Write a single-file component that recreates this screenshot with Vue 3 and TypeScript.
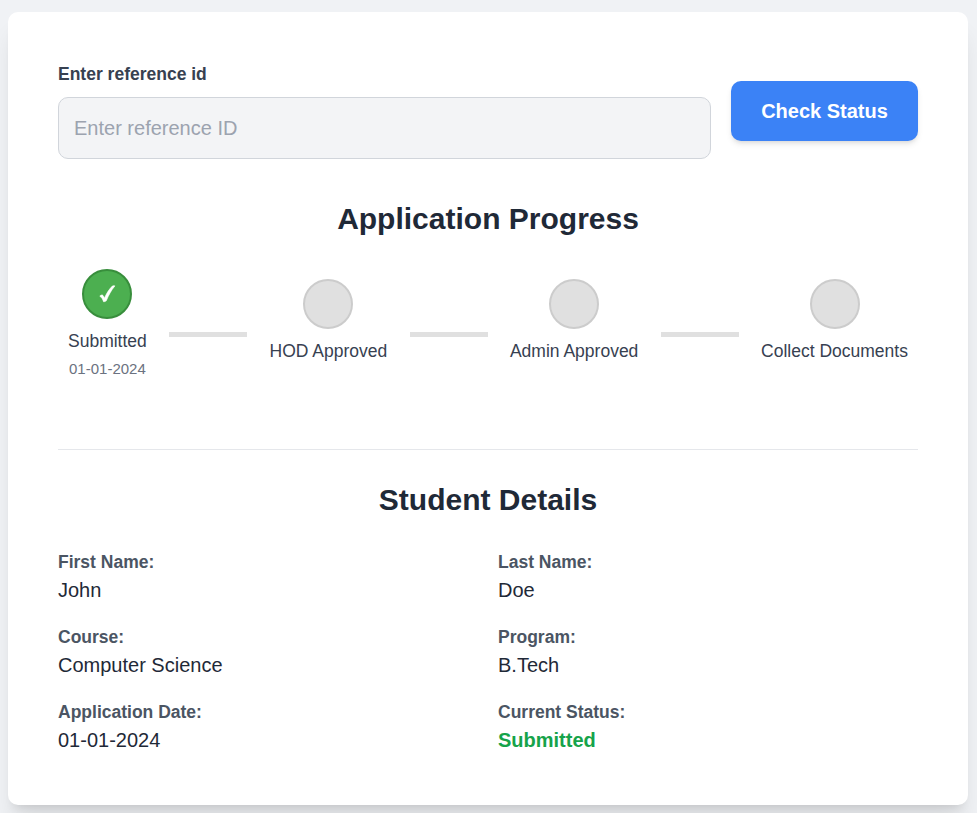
<script setup lang="ts">
interface Step { label: string; date?: string; done: boolean }
const steps: Step[] = [
  { label: 'Submitted', date: '01-01-2024', done: true },
  { label: 'HOD Approved', done: false },
  { label: 'Admin Approved', done: false },
  { label: 'Collect Documents', done: false },
]
const details: { label: string; value: string; status?: boolean }[] = [
  { label: 'First Name:', value: 'John' },
  { label: 'Last Name:', value: 'Doe' },
  { label: 'Course:', value: 'Computer Science' },
  { label: 'Program:', value: 'B.Tech' },
  { label: 'Application Date:', value: '01-01-2024' },
  { label: 'Current Status:', value: 'Submitted', status: true },
]
</script>

<template>
  <main class="page">
    <section class="card">
      <form class="search" @submit.prevent>
        <div class="field">
          <label class="field-label" for="ref">Enter reference id</label>
          <input id="ref" class="field-input" type="text" placeholder="Enter reference ID" />
        </div>
        <button class="check" type="submit">Check Status</button>
      </form>
      <h2 class="title">Application Progress</h2>
      <div class="progress">
        <template v-for="(step, i) in steps" :key="step.label">
          <div v-if="i > 0" class="line"></div>
          <div class="step">
            <div class="circle" :class="{ done: step.done }">
              <svg v-if="step.done" width="18" height="20" viewBox="0 0 18 20"><path d="M1.8 12.2C2.4 11.2 3.5 10.8 4.5 11.1C5.3 11.6 5.9 12.8 6.4 14.2C8.6 9.3 11.2 5.1 14.3 2.1C15.2 1.6 16.2 1.6 16.9 1.9C13.3 6.3 10.6 11 8.3 16.8C7.4 17.5 6.4 17.8 5.5 17.7C4.8 15.3 3.7 13.3 1.8 12.2Z" fill="#fff" stroke="#fff" stroke-width=".6" stroke-linejoin="round" /></svg>
            </div>
            <div class="step-label">{{ step.label }}</div>
            <div class="step-date">{{ step.date }}</div>
          </div>
        </template>
      </div>
      <div class="details">
        <h2 class="title">Student Details</h2>
        <dl class="grid">
          <div v-for="item in details" :key="item.label">
            <dt>{{ item.label }}</dt>
            <dd :class="{ status: item.status }">{{ item.value }}</dd>
          </div>
        </dl>
      </div>
    </section>
  </main>
</template>

<style>
body { background: #f0f2f5; }
</style>

<style scoped>
* { box-sizing: border-box; margin: 0; }
.page { height: 813px; overflow: hidden; padding: 12px 9px 0 8px; background: #f0f2f5; font-family: "Liberation Sans", Arial, sans-serif; }
.card { height: 793px; padding: 50px; background: #fff; border-radius: 10px; box-shadow: 0 20px 25px -5px rgba(0, 0, 0, .1), 0 8px 10px -6px rgba(0, 0, 0, .1); }
.search { display: flex; align-items: center; gap: 20px; height: 98px; }
.field { flex: 1; align-self: flex-start; }
.field-label { display: block; height: 35px; line-height: 24px; font-size: 17.5px; font-weight: 700; color: #374151; }
.field-input { display: block; width: 100%; height: 62px; padding: 0 15px; border: 1px solid #d1d5db; border-radius: 10px; background: #f3f4f6; font: 20px "Liberation Sans", Arial, sans-serif; }
.field-input::placeholder { color: #9ca3af; opacity: 1; }
.check { width: 187px; height: 60px; border: 0; border-radius: 10px; background: #3b82f6; color: #fff; font: 700 20px "Liberation Sans", Arial, sans-serif; box-shadow: 0 4px 6px -1px rgba(0, 0, 0, .1), 0 2px 4px -2px rgba(0, 0, 0, .1); }
.title { text-align: center; font-size: 30px; line-height: 40px; color: #1f2937; }
.search + .title { margin-top: 39px; }
.progress { display: flex; align-items: center; justify-content: space-between; height: 131px; margin-top: 30px; padding: 0 10px; }
.step { display: flex; flex-direction: column; align-items: center; padding-bottom: 21px; }
.circle { display: flex; align-items: center; justify-content: center; width: 50px; height: 50px; border: 2px solid #ccc; border-radius: 50%; background: #e0e0e0; }
.circle.done { background: #4caf50; border-color: #388e3c; }
.step-label { margin-top: 10px; font-size: 17.5px; line-height: 24px; color: #374151; }
.step-date { margin-top: 6px; font-size: 15px; line-height: 20px; color: #6b7280; }
.line { width: 78px; height: 5px; background: #e0e0e0; }
.details { margin-top: 49px; padding-top: 30px; border-top: 1px solid #e5e7eb; }
.grid { display: grid; grid-template-columns: 1fr 1fr; gap: 20px; margin-top: 30px; }
dt { font-size: 17.5px; line-height: 25px; font-weight: 700; color: #4b5563; }
dd { font-size: 20px; line-height: 30px; color: #1f2937; }
dd.status { color: #16a34a; font-weight: 700; }
</style>
